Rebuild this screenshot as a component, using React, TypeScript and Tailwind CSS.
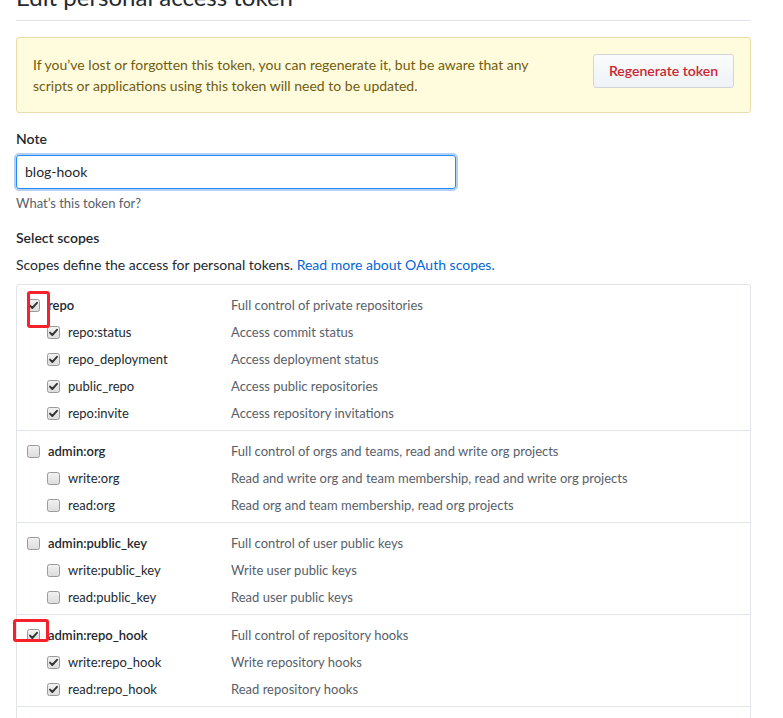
import React from "react";

type Scope = { name: string; desc: string; checked: boolean };
type Group = { parent: Scope; children: Scope[] };

const groups: Group[] = [
  {
    parent: { name: "repo", desc: "Full control of private repositories", checked: true },
    children: [
      { name: "repo:status", desc: "Access commit status", checked: true },
      { name: "repo_deployment", desc: "Access deployment status", checked: true },
      { name: "public_repo", desc: "Access public repositories", checked: true },
      { name: "repo:invite", desc: "Access repository invitations", checked: true },
    ],
  },
  {
    parent: { name: "admin:org", desc: "Full control of orgs and teams, read and write org projects", checked: false },
    children: [
      { name: "write:org", desc: "Read and write org and team membership, read and write org projects", checked: false },
      { name: "read:org", desc: "Read org and team membership, read org projects", checked: false },
    ],
  },
  {
    parent: { name: "admin:public_key", desc: "Full control of user public keys", checked: false },
    children: [
      { name: "write:public_key", desc: "Write user public keys", checked: false },
      { name: "read:public_key", desc: "Read user public keys", checked: false },
    ],
  },
  {
    parent: { name: "admin:repo_hook", desc: "Full control of repository hooks", checked: true },
    children: [
      { name: "write:repo_hook", desc: "Write repository hooks", checked: true },
      { name: "read:repo_hook", desc: "Read repository hooks", checked: true },
    ],
  },
  {
    parent: { name: "admin:org_hook", desc: "Full control of organization hooks", checked: false },
    children: [],
  },
];

function Checkbox({ checked }: { checked: boolean }) {
  return (
    <svg width="13" height="13" viewBox="0 0 13 13" className="shrink-0">
      <defs>
        <linearGradient id="cbg" x1="0" y1="0" x2="0" y2="1">
          <stop offset="0" stopColor="#f2f2f2" />
          <stop offset="1" stopColor="#dcdcdc" />
        </linearGradient>
      </defs>
      <rect x="0.5" y="0.5" width="12" height="12" rx="2" fill="url(#cbg)" stroke="#9a9a9a" />
      {checked && (
        <path d="M3 6.6 L5.3 9 L10 3.8" fill="none" stroke="#333" strokeWidth="1.9" strokeLinecap="round" strokeLinejoin="round" />
      )}
    </svg>
  );
}

function ScopeRow({ scope, child }: { scope: Scope; child?: boolean }) {
  return (
    <div className="flex h-[27px] items-center text-[13px]">
      <div className={`flex w-[204px] shrink-0 items-center ${child ? "pl-[20px]" : ""}`}>
        <Checkbox checked={scope.checked} />
        <span className={`ml-[8px] ${child ? "" : "font-semibold"} text-[#24292e]`}>{scope.name}</span>
      </div>
      <span className="text-[#586069]">{scope.desc}</span>
    </div>
  );
}

export default function App() {
  return (
    <div
      className="relative h-[718px] overflow-hidden bg-white text-[14px] leading-[21px] text-[#24292e]"
      style={{ fontFamily: "Lato, 'Liberation Sans', sans-serif" }}
    >
      <div className="ml-[16px] w-[735px]">
        <div className="border-b border-[#e1e4e8] pb-[8px]">
          <h1 className="mt-[-18px] text-[24px] font-normal leading-[30px]">Edit personal access token</h1>
        </div>

        <div className="mt-[16px] flex items-start justify-between rounded-[3px] border border-[#e8dcae] bg-[#fffbdd] p-[16px] text-[#735c0f]">
          <p className="w-[520px]">
            If you’ve lost or forgotten this token, you can regenerate it, but be aware that any scripts or
            applications using this token will need to be updated.
          </p>
          <button className="h-[34px] rounded-[3px] border border-[#d1d5da] bg-gradient-to-b from-[#fafbfc] to-[#eff3f6] px-[15px] pb-[2px] font-semibold text-[#cb2431]">
            Regenerate token
          </button>
        </div>

        <div className="mt-[15px]">
          <label className="block font-semibold">Note</label>
          <input
            defaultValue="blog-hook"
            className="mt-[6px] block h-[34px] w-[440px] rounded-[3px] border border-[#2188ff] px-[8px] pb-[1px] text-[14px] text-[#24292e] shadow-[0_0_0_2px_rgba(3,102,214,0.3)] outline-none"
            style={{ fontFamily: "inherit" }}
          />
          <p className="mt-[5px] text-[13px] leading-[18px] text-[#586069]">What’s this token for?</p>
        </div>

        <h3 className="mt-[15px] font-semibold">Select scopes</h3>
        <p className="mt-[6px]">
          Scopes define the access for personal tokens.{" "}
          <a className="text-[#0366d6]" href="#">
            Read more about OAuth scopes.
          </a>
        </p>

        <div className="mt-[9px] rounded-[3px] border border-[#e1e4e8]">
          {groups.map((g, i) => (
            <div key={g.parent.name} className={`pl-[10px] pt-[7px] pb-[3px] ${i > 0 ? "border-t border-[#e1e4e8]" : ""}`}>
              <ScopeRow scope={g.parent} />
              {g.children.map((c) => (
                <ScopeRow key={c.name} scope={c} child />
              ))}
            </div>
          ))}
        </div>
      </div>

      {/* red annotation boxes */}
      <div className="absolute left-[27px] top-[291px] h-[37px] w-[23px] rounded-[3px] border-[3px] border-[#f5222d]" />
      <div className="absolute left-[13px] top-[619px] h-[23px] w-[36px] rounded-[3px] border-[3px] border-[#f5222d]" />
    </div>
  );
}
